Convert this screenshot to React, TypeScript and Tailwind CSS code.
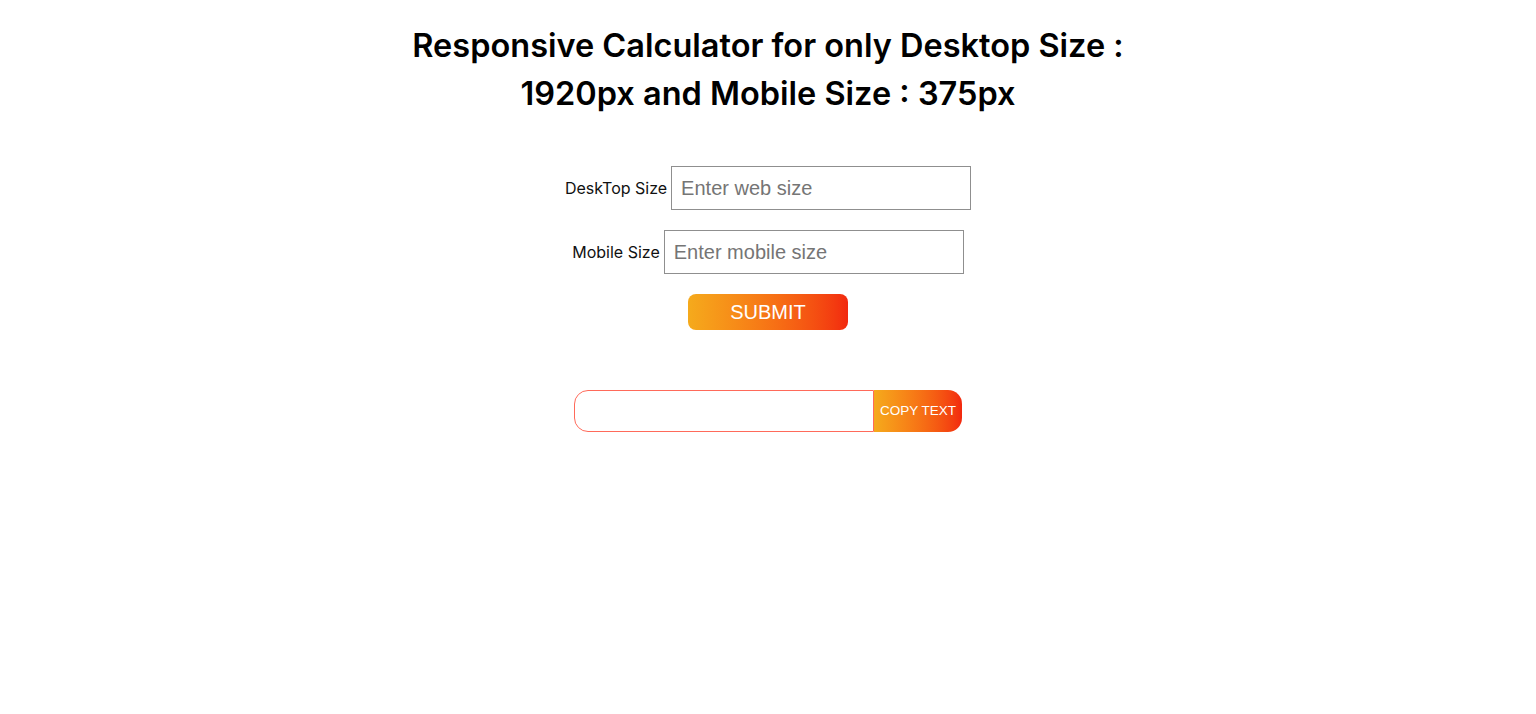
export default function App() {
  return (
    <div className="min-h-[714px] w-full bg-white font-['Inter','Liberation_Sans',sans-serif]">
      <h1 className="mx-auto w-[760px] pt-[22px] text-center text-[32.5px] font-semibold leading-[48px] text-black">
        Responsive Calculator for only Desktop Size : 1920px and Mobile Size : 375px
      </h1>

      <div className="mt-[48px] flex flex-col items-center">
        <div className="flex items-center gap-[4px]">
          <label className="text-[16px] text-[#111]">DeskTop Size</label>
          <input
            type="text"
            placeholder="Enter web size"
            className="h-[44px] w-[300px] border border-[#8f8f8f] px-[9px] font-['Liberation_Sans',sans-serif] text-[20px] text-black placeholder:text-[#757575] outline-none"
          />
        </div>

        <div className="mt-[20px] flex items-center gap-[4px]">
          <label className="text-[16px] text-[#111]">Mobile Size</label>
          <input
            type="text"
            placeholder="Enter mobile size"
            className="h-[44px] w-[300px] border border-[#8f8f8f] px-[9px] font-['Liberation_Sans',sans-serif] text-[20px] text-black placeholder:text-[#757575] outline-none"
          />
        </div>

        <button className="mt-[20px] h-[36px] w-[160px] rounded-[8px] bg-gradient-to-r from-[#f5aa1c] to-[#f2280f] font-['Liberation_Sans',sans-serif] text-[20px] text-white">
          SUBMIT
        </button>

        <div className="mt-[60px] flex">
          <input
            type="text"
            className="h-[42px] w-[300px] rounded-l-[14px] border border-[#ff6a5a] px-[10px] outline-none"
          />
          <button className="h-[42px] w-[88px] rounded-r-[14px] bg-gradient-to-r from-[#f5aa1c] to-[#f2280f] font-['Liberation_Sans',sans-serif] text-[13.5px] text-white">
            COPY TEXT
          </button>
        </div>
      </div>
    </div>
  )
}
